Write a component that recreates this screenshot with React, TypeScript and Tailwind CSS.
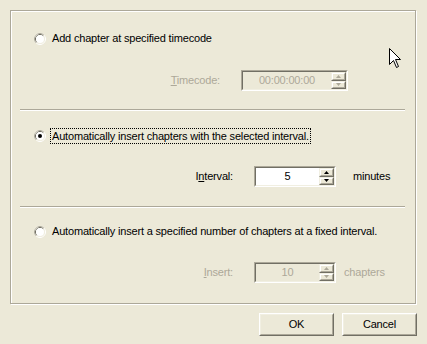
import React from 'react';

function Radio({ checked }: { checked?: boolean }) {
  return (
    <svg width="12" height="12" viewBox="0 0 12 12" className="shrink-0">
      <circle cx="6" cy="6" r="5.5" fill="none" stroke="#ffffff" />
      <path d="M2.11 9.89 A5.5 5.5 0 0 1 9.89 2.11" fill="none" stroke="#ACA899" />
      <circle cx="6" cy="6" r="4.5" fill="none" stroke="#F1EFE2" />
      <path d="M2.82 9.18 A4.5 4.5 0 0 1 9.18 2.82" fill="none" stroke="#716F64" />
      <circle cx="6" cy="6" r="4" fill="#ffffff" />
      {checked && <circle cx="6" cy="6" r="2" fill="#000000" />}
    </svg>
  );
}

function Arrow({ up, disabled }: { up?: boolean; disabled?: boolean }) {
  const color = disabled ? '#ACA899' : '#000000';
  return (
    <svg width="5" height="3" viewBox="0 0 5 3">
      {up ? (
        <path d="M2.5 0 L5 3 L0 3 Z" fill={color} />
      ) : (
        <path d="M0 0 L5 0 L2.5 3 Z" fill={color} />
      )}
    </svg>
  );
}

function SpinButton({ up, disabled }: { up?: boolean; disabled?: boolean }) {
  return (
    <div className="flex-1 border border-t-[#F1EFE2] border-l-[#F1EFE2] border-r-[#716F64] border-b-[#716F64] bg-[#ECE9D8]">
      <div className="h-full flex items-center justify-center border border-t-white border-l-white border-r-[#ACA899] border-b-[#ACA899]">
        <Arrow up={up} disabled={disabled} />
      </div>
    </div>
  );
}

function SpinBox({ value, width, disabled }: { value: string; width: string; disabled?: boolean }) {
  return (
    <div className={`${width} h-[21px] shrink-0 border border-t-[#ACA899] border-l-[#ACA899] border-r-white border-b-white`}>
      <div
        className={`h-full flex border border-t-[#716F64] border-l-[#716F64] border-r-[#F1EFE2] border-b-[#F1EFE2] ${
          disabled ? 'bg-[#ECE9D8]' : 'bg-white'
        }`}
      >
        <div
          className={`flex-1 text-center leading-[17px] ${disabled ? 'text-[#ACA899]' : 'text-black'}`}
        >
          {value}
        </div>
        <div className="w-[15px] flex flex-col">
          <SpinButton up disabled={disabled} />
          <SpinButton disabled={disabled} />
        </div>
      </div>
    </div>
  );
}

function Separator() {
  return (
    <div className="ml-[9px] w-[385px] h-[2px] border-t border-t-[#ACA899] border-b border-b-white" />
  );
}

function PushButton({ label }: { label: string }) {
  return (
    <button className="w-[75px] h-[23px] border border-t-white border-l-white border-r-[#716F64] border-b-[#716F64] bg-[#ECE9D8]">
      <div className="h-full flex items-center justify-center border border-t-[#F1EFE2] border-l-[#F1EFE2] border-r-[#ACA899] border-b-[#ACA899]">
        {label}
      </div>
    </button>
  );
}

export default function App() {
  return (
    <div className="relative w-[427px] h-[344px] bg-[#ECE9D8] pt-[10px] pl-[10px] text-[11px] tracking-[-0.18px] text-black font-['Liberation_Sans',Arial,sans-serif] select-none overflow-hidden">
      {/* Group box */}
      <div className="w-[406px] h-[294px] border border-[#ACA899] shadow-[1px_1px_0_#ffffff,inset_1px_1px_0_#ffffff] flex flex-col">
        {/* Option 1 */}
        <div className="mt-[21px] h-[13px] pl-[23px] flex items-center">
          <Radio />
          <span className="ml-[4px] px-[1px] border border-dotted border-transparent leading-[13px]">
            Add chapter at specified timecode
          </span>
        </div>
        <div className="mt-[25px] h-[21px] flex items-center">
          <div className="w-[209px] text-right text-[#ACA899]">
            <span className="underline">T</span>imecode:
          </div>
          <div className="ml-[21px]">
            <SpinBox value="00:00:00:00" width="w-[107px]" disabled />
          </div>
        </div>

        <div className="mt-[18px]">
          <Separator />
        </div>

        {/* Option 2 */}
        <div className="mt-[17px] h-[16px] pl-[23px] flex items-center">
          <Radio checked />
          <span className="ml-[4px] px-[1px] border border-dotted border-black leading-[14px]">
            Automatically insert chapters with the selected interval.
          </span>
        </div>
        <div className="mt-[22px] h-[21px] flex items-center">
          <div className="w-[222px] text-right">
            I<span className="underline">n</span>terval:
          </div>
          <div className="ml-[21px]">
            <SpinBox value="5" width="w-[82px]" />
          </div>
          <div className="ml-[17px]">minutes</div>
        </div>

        <div className="mt-[19px]">
          <Separator />
        </div>

        {/* Option 3 */}
        <div className="mt-[17px] h-[13px] pl-[23px] flex items-center">
          <Radio />
          <span className="ml-[4px] px-[1px] border border-dotted border-transparent leading-[13px]">
            Automatically insert a specified number of chapters at a fixed interval.
          </span>
        </div>
        <div className="mt-[24px] h-[21px] flex items-center">
          <div className="w-[222px] text-right text-[#ACA899]">
            <span className="underline">I</span>nsert:
          </div>
          <div className="ml-[21px]">
            <SpinBox value="10" width="w-[82px]" disabled />
          </div>
          <div className="ml-[8px] text-[#ACA899]">chapters</div>
        </div>
      </div>

      {/* Buttons */}
      <div className="mt-[9px] w-[407px] flex justify-end gap-[8px]">
        <PushButton label="OK" />
        <PushButton label="Cancel" />
      </div>

      {/* Mouse cursor */}
      <svg
        className="absolute left-[389px] top-[48px]"
        width="12"
        height="20"
        viewBox="0 0 12 20"
      >
        <path
          d="M0.5 0.5 L0.5 16.5 L4.5 12.5 L7.5 19.5 L9.5 18.5 L6.5 11.5 L11.5 11.5 Z"
          fill="#ffffff"
          stroke="#000000"
          strokeWidth="1"
        />
      </svg>
    </div>
  );
}
